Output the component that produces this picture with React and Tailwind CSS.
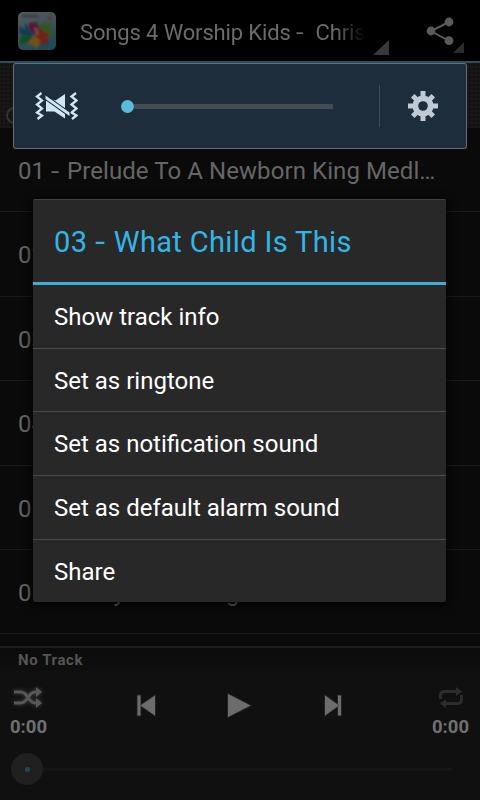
import React from "react";

const TRACKS = [
  ["01", "Prelude To A Newborn King Medl…"],
  ["02", "O Come All Ye Faithful"],
  ["03", "What Child Is This"],
  ["04", "Silent Night"],
  ["05", "Joy To The World"],
  ["06", "Away In A Manger"],
];

const ACTIONS = [
  "Show track info",
  "Set as ringtone",
  "Set as notification sound",
  "Set as default alarm sound",
  "Share",
];

function Dash() {
  return <span className="inline-block origin-left scale-x-[1.25] pr-[3px]">-</span>;
}

function AlbumArt() {
  return (
    <svg className="h-[38px] w-[38px] shrink-0" viewBox="0 0 38 38">
      <defs>
        <clipPath id="art">
          <rect width="38" height="38" rx="5" />
        </clipPath>
        <linearGradient id="artBg" x1="0" y1="0" x2="0.5" y2="1">
          <stop offset="0" stopColor="#535a5c" />
          <stop offset="0.45" stopColor="#43565a" />
          <stop offset="1" stopColor="#1f4954" />
        </linearGradient>
        <filter id="soft">
          <feGaussianBlur stdDeviation="0.9" />
        </filter>
      </defs>
      <g clipPath="url(#art)">
        <rect width="38" height="38" fill="url(#artBg)" />
        <g filter="url(#soft)">
          <path d="M4 4h17" stroke="#2c3032" strokeWidth="1.6" />
          <circle cx="32" cy="6" r="2" fill="#6b3526" />
          <path d="M2 14l5 4 0-7 5 5 3-4 1 12-8 1-6-3-1-1z" fill="#093e55" />
          <path d="M11 11l8-1 1 4 6-1-2 7-8 2-5-4z" fill="#591236" />
          <path d="M21 15l7-6 1 5 5-4-2 8 4 3-7 4-7-2z" fill="#33561d" />
          <path d="M17 20l7-3 2 3 6 1-3 4 2 6-7 1-8-4z" fill="#722015" />
          <path d="M12 27l5-3 5 4-1 6-4 3-2-5-5 1z" fill="#725015" />
          <path d="M2 25l7-3 5 4-5 5-7 1z" fill="#164b21" />
          <path d="M17 16l2 3 0 4" stroke="#777" strokeWidth="1.2" fill="none" />
        </g>
      </g>
    </svg>
  );
}

function Header() {
  return (
    <header className="flex h-[61px] shrink-0 bg-black pl-[18px]">
      <div className="pt-[12px]">
        <AlbumArt />
      </div>
      <div className="ml-[24px] w-[283px] whitespace-pre pt-[18px] text-[22px] leading-[30px] tracking-[-0.14px] text-[#6b6b6b] [mask-image:linear-gradient(to_right,#000_90%,transparent_101%)]">
        Songs 4 Worship Kids <Dash />{"  "}Chris
      </div>
      <svg className="mt-[40px] ml-[10px] h-[15px] w-[16px] shrink-0" viewBox="0 0 16 15">
        <path d="M16 0v15H0z" fill="#393939" />
      </svg>
      <svg className="mt-[17px] ml-[37px] h-[36px] w-[38px] shrink-0" viewBox="0 0 38 36">
        <path d="M23 5L5 14l18 10" fill="none" stroke="#5a5a5a" strokeWidth="2" />
        <circle cx="23" cy="5" r="4.4" fill="#5a5a5a" />
        <circle cx="5" cy="14" r="4.4" fill="#5a5a5a" />
        <circle cx="23" cy="23.7" r="4.4" fill="#5a5a5a" />
        <path d="M38 25v11H27z" fill="#2c2c2c" />
      </svg>
    </header>
  );
}

function VolumePanel() {
  return (
    <section className="absolute top-[63px] left-[13px] flex h-[86px] w-[454px] items-center rounded-[3px] border border-[#666c70] border-t-[#527687] bg-[#1e2d3b]">
      <svg className="ml-[21px] h-[28px] w-[43px] shrink-0" viewBox="0 0 43 28">
        <g fill="none" stroke="#cfe6f4" strokeWidth="2.3">
          <path d="M6.500 1L2 4.500l5 4-5 4 5 4-5 4 5 3-4.500 3.500" />
          <path d="M41 1l-4.500 3.500 5 4-5 4 5 4-5 4 5 3-4.500 3.500" />
        </g>
        <g fill="#cfe6f4">
          <path d="M11 6v13.500h8.500L30 26.500V2l-9.500 6.500z" />
          <path
            d="M10.500 3.500L34.500 20.500v3.500L10.500 7z"
            stroke="#1e2d3b"
            strokeWidth="2"
            paintOrder="stroke"
          />
        </g>
      </svg>
      <div className="ml-[43px] flex w-[212px] shrink-0 items-center">
        <div className="h-[13px] w-[13px] shrink-0 rounded-full bg-[#5abcd8]" />
        <div className="h-[5px] grow bg-[#434c52]" />
      </div>
      <div className="ml-[46px] h-[42px] w-px shrink-0 bg-[#3e4c58]" />
      <svg className="ml-[28px] h-[30px] w-[30px] shrink-0" viewBox="-15 -15 30 30">
        <g fill="#c0cad6">
          <path d="M-2.500-15h5v30h-5z" />
          <path d="M-2.500-15h5v30h-5z" transform="rotate(90)" />
          <path d="M-2.500-14.500h5v29h-5z" transform="rotate(45)" />
          <path d="M-2.500-14.500h5v29h-5z" transform="rotate(-45)" />
          <circle r="10.500" />
        </g>
        <circle r="4.800" fill="#1e2d3b" />
      </svg>
    </section>
  );
}

function Dialog() {
  return (
    <section className="absolute top-[199px] left-[33px] h-[403px] w-[413px] rounded-[2px] border-t border-[#414141] bg-[#282828] shadow-[0_2px_8px_2px_rgba(0,0,0,0.7)]">
      <h1 className="h-[85px] border-b-[3px] border-[#42acd9] pt-[22px] pl-[21px] text-[29px] leading-[40px] tracking-[0.36px] whitespace-nowrap text-[#33b5e5]">
        03 <Dash /> What Child Is This
      </h1>
      <ul>
        {ACTIONS.map((a) => (
          <li
            key={a}
            className="h-[63.7px] border-b border-[#4b4b4b] pt-[17px] pl-[21px] text-[24px] leading-[30px] whitespace-nowrap text-white last:border-b-0"
          >
            {a}
          </li>
        ))}
      </ul>
    </section>
  );
}

function Player() {
  return (
    <footer className="h-[154px] shrink-0 border-t-2 border-[#1c1c1c] bg-gradient-to-b from-[#0b0b0b] to-[#101010] to-20% text-[#707070]">
      <div className="h-[27px] pt-[2px] pl-[18px] text-[15px] leading-[20px] font-bold tracking-[0.6px] text-[#555]">
        No Track
      </div>
      <div className="flex justify-between px-[11px]">
        <div className="flex w-[37px] flex-col">
          <svg className="mt-[11px] ml-[2px] h-[23px] w-[32px] overflow-visible [filter:blur(0.4px)_drop-shadow(0_0_2px_#444)]" viewBox="0 0 32 23">
            <g fill="none" stroke="#585858" strokeWidth="3">
              <path d="M1 6h7c7 0 7 11 14 11h4" />
              <path d="M1 17h7c7 0 7-11 14-11h4" />
            </g>
            <path d="M23 1l6 5-6 5zM23 12l6 5-6 5z" fill="#585858" />
          </svg>
          <span className="-ml-px pt-[7px] text-[18.5px] leading-[22px] font-bold whitespace-nowrap">0:00</span>
        </div>
        <svg className="mt-[15px] h-[32px] w-[210px]" viewBox="0 0 210 32">
          <g fill="#6c6c6c" stroke="#292929" strokeWidth="1.5" paintOrder="stroke">
            <path d="M2.500 5.500h3v20h-3zM20 5.500v20L5.500 15.500z" />
            <path d="M93 4L115.500 15.500 93 27z" />
            <path d="M190 5.500v20l14-10zM203 5.500h3v20h-3z" />
          </g>
        </svg>
        <div className="flex w-[37px] flex-col items-center">
          <svg className="mt-[11px] h-[23px] w-[26px]" viewBox="0 0 26 23">
            <g fill="none" stroke="#2c2c2c" strokeWidth="3">
              <path d="M2.500 13V9q0-3.500 4-3.500H20" />
              <path d="M23.500 9v5q0 3.500-4 3.500H6" />
            </g>
            <path d="M18 1l6 4.500-6 4.500zM8 13l-6 4.500L8 22z" fill="#2c2c2c" />
          </svg>
          <span className="pt-[7px] text-[18.5px] leading-[22px] font-bold">0:00</span>
        </div>
      </div>
      <div className="mt-[15px] flex items-center pl-[11px]">
        <div className="flex h-[32px] w-[32px] items-center justify-center rounded-full bg-[#202020]">
          <div className="h-[5px] w-[5px] rounded-full bg-[#23485c]" />
        </div>
        <div className="h-[3px] w-[409px] bg-[#161616]" />
      </div>
    </footer>
  );
}

export default function App() {
  return (
    <main className="relative flex h-[800px] w-[480px] flex-col overflow-hidden bg-[#0a0a0a] font-['Roboto',sans-serif]">
      <Header />
      <div className="flex h-[67px] shrink-0 items-end border-t-2 border-[#28505f] bg-[#171717] bg-[radial-gradient(#101010_1px,transparent_1.5px)] bg-[length:4px_4px] pb-[4px] pl-[6px]">
        <div className="h-[17px] w-[17px] rounded-full border-2 border-[#333]" />
      </div>
      <ul className="h-[518px] shrink-0 overflow-hidden">
        {TRACKS.map(([no, name]) => (
          <li
            key={no}
            className="h-[84.4px] border-b border-[#1b1b1b] pt-[28px] pl-[18px] text-[24px] leading-[30px] tracking-[0.08px] whitespace-nowrap text-[#666]"
          >
            {no} <Dash /> {name}
          </li>
        ))}
      </ul>
      <Player />
      <VolumePanel />
      <Dialog />
    </main>
  );
}
